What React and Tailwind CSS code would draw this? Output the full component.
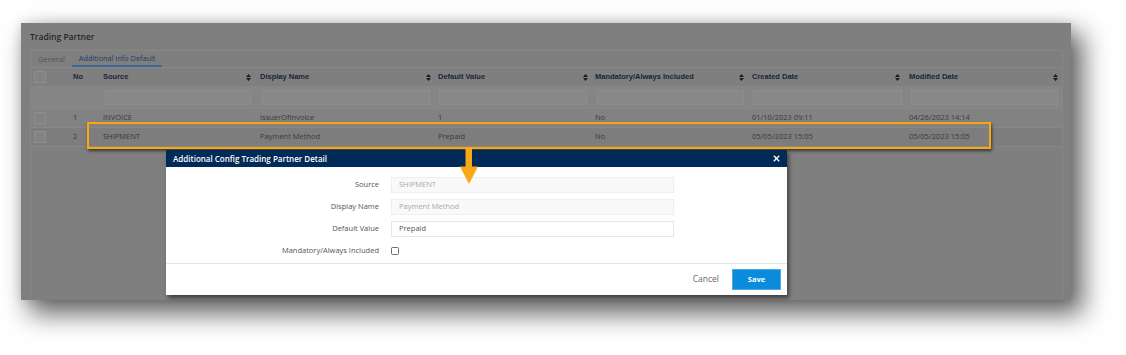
import React from "react";

const COLS = "grid grid-cols-[34px_34px_156px_178px_157px_157px_158px_157px]";

const headers = [
  { t: "Source", pl: "pl-[4px]", pr: "pr-[4px]" },
  { t: "Display Name", pl: "pl-[5px]", pr: "pr-[2px]" },
  { t: "Default Value", pl: "pl-[5px]", pr: "pr-[2px]" },
  { t: "Mandatory/Always Included", pl: "pl-[5px]", pr: "pr-[3px]" },
  { t: "Created Date", pl: "pl-[5px]", pr: "pr-[5px]" },
  { t: "Modified Date", pl: "pl-[4px]", pr: "pr-[4px]" },
];

const filterPads = [
  "pl-[6px] pr-[4px]",
  "pl-[7px] pr-[3px]",
  "pl-[6px] pr-[3px]",
  "pl-[7px] pr-[3px]",
  "pl-[6px] pr-[3px]",
  "pl-[6px] pr-[4px]",
];

const rows = [
  { no: "1", bg: "bg-[#828282]", cells: ["INVOICE", "IssuerOfInvoice", "1", "No", "01/10/2023 09:11", "04/26/2023 14:14"] },
  { no: "2", bg: "bg-[#7d7d7d]", cells: ["SHIPMENT", "Payment Method", "Prepaid", "No", "05/05/2023 15:05", "05/05/2023 15:05"] },
];

function SortIcon() {
  return (
    <svg width="5" height="7" viewBox="0 0 5 7" className="shrink-0">
      <path d="M2.5 0 L5 2.9 H0 Z M0 4.1 H5 L2.5 7 Z" fill="#1c1c1c" />
    </svg>
  );
}

function Box() {
  return <div className="w-[12px] h-[12px] border border-[#8e8e8e] bg-[#838383]" />;
}

function ModalRow({ label, children }) {
  return (
    <div className="h-[16px] flex items-center">
      <div className="w-[213px] text-right text-[7.5px] text-[#555555] leading-none">{label}</div>
      <div className="ml-[12px] flex items-center">{children}</div>
    </div>
  );
}

export default function App() {
  return (
    <div className="w-[1126px] h-[355px] bg-white overflow-hidden font-['Open_Sans',sans-serif]">
      <div className="relative ml-[21px] mt-[23px] w-[1050px] h-[277px] bg-[#7f7f7f] shadow-[10px_12px_24px_2px_rgba(0,0,0,0.6),0_0_10px_rgba(0,0,0,0.12)] pt-[8px] pl-[9px] pr-[8px] flex flex-col">
        <div className="h-[12px] leading-[12px] text-[8.5px] font-semibold text-[#262626]">Trading Partner</div>
        <div className="mt-[7px] flex-1 border-l border-t border-r border-[#878787] flex flex-col">
          {/* tabs */}
          <div className="h-[17px] flex border-b border-[#878787]">
            <div className="h-full px-[7px] flex items-center text-[7.3px] text-[#555555]">General</div>
            <div className="h-full px-[7px] flex items-center text-[7.3px] text-[#1c3d6b] border-b-2 border-[#3b6896]">Additional Info Default</div>
          </div>
          {/* header */}
          <div className={`${COLS} h-[19px] border-b border-[#868686]`}>
            <div className="flex items-center pl-[3px]"><Box /></div>
            <div className="flex items-center pl-[8px] text-[7.5px] font-bold font-['Liberation_Sans',sans-serif] text-[#17253c]">No</div>
            {headers.map((h) => (
              <div key={h.t} className={`flex items-center justify-between ${h.pl} ${h.pr} text-[7.5px] font-bold font-['Liberation_Sans',sans-serif] text-[#17253c]`}>
                <span>{h.t}</span>
                <SortIcon />
              </div>
            ))}
          </div>
          {/* filter row */}
          <div className={`${COLS} h-[22px] bg-[#858585] border-b border-[#888888]`}>
            <div />
            <div />
            {filterPads.map((p, i) => (
              <div key={i} className={`flex items-center ${p}`}>
                <div className="w-full h-[15px] bg-[#888888] border border-[#8d8d8d]" />
              </div>
            ))}
          </div>
          {/* rows */}
          {rows.map((r) => (
            <div key={r.no} className={`${COLS} h-[19px] ${r.bg} border-b border-[#878787]`}>
              <div className="flex items-center pl-[3px]"><Box /></div>
              <div className="flex items-center pl-[8px] text-[7.5px] text-[#3a3a3a]">{r.no}</div>
              {r.cells.map((c, i) => (
                <div key={i} className={`flex items-center ${headers[i].pl} text-[7.5px] text-[#3a3a3a] whitespace-nowrap`}>{c}</div>
              ))}
            </div>
          ))}
        </div>

        {/* orange highlight */}
        <div className="absolute left-[66px] top-[99px] w-[904px] h-[27px] border-[2px] border-[#f7a90f] shadow-[1px_2px_3px_rgba(0,0,0,0.55)]" />

        {/* modal */}
        <div className="absolute left-[145px] top-[127px] w-[621px] h-[145px] bg-white shadow-[2px_3px_4px_rgba(0,0,0,0.5)] flex flex-col">
          <div className="h-[17px] bg-[#002a58] flex items-center justify-between pl-[7px] pr-[7px]">
            <span className="text-[8px] font-semibold text-white leading-none">Additional Config Trading Partner Detail</span>
            <svg width="7" height="7" viewBox="0 0 7 7">
              <path d="M0.8 0.8 L6.2 6.2 M6.2 0.8 L0.8 6.2" stroke="#ffffff" strokeWidth="1.3" />
            </svg>
          </div>
          <div className="h-[96px] pt-[10px] flex flex-col gap-[6px]">
            <ModalRow label="Source">
              <div className="w-[283px] h-[16px] bg-[#f9f9f9] border border-[#eeeeee] flex items-center pl-[7px] text-[7.5px] text-[#a9a9a9]">SHIPMENT</div>
            </ModalRow>
            <ModalRow label="Display Name">
              <div className="w-[283px] h-[16px] bg-[#f9f9f9] border border-[#eeeeee] flex items-center pl-[7px] text-[7.5px] text-[#a9a9a9]">Payment Method</div>
            </ModalRow>
            <ModalRow label="Default Value">
              <div className="w-[283px] h-[16px] bg-white border border-[#e3e7ec] flex items-center pl-[7px] text-[7.5px] text-[#555555]">Prepaid</div>
            </ModalRow>
            <ModalRow label="Mandatory/Always Included">
              <div className="w-[8px] h-[8px] border border-[#6b6b6b] rounded-[1.5px] bg-white" />
            </ModalRow>
          </div>
          <div className="flex-1 border-t border-[#e1e6ec] flex items-center justify-end pr-[6px] gap-[13px]">
            <span className="text-[8.5px] text-[#6a6a6a]">Cancel</span>
            <div className="w-[49px] h-[21px] bg-[#0b8bdc] border border-[#4fa9e4] flex items-center justify-center text-[7.5px] font-bold text-white">Save</div>
          </div>
        </div>

        {/* arrow */}
        <svg className="absolute left-[438px] top-[124px]" width="20" height="38" viewBox="0 0 20 38">
          <rect x="6.5" y="0" width="6.5" height="21" fill="#f7a91a" />
          <path d="M1 19.5 H19 L10 37 Z" fill="#f7a91a" />
        </svg>
      </div>
    </div>
  );
}
